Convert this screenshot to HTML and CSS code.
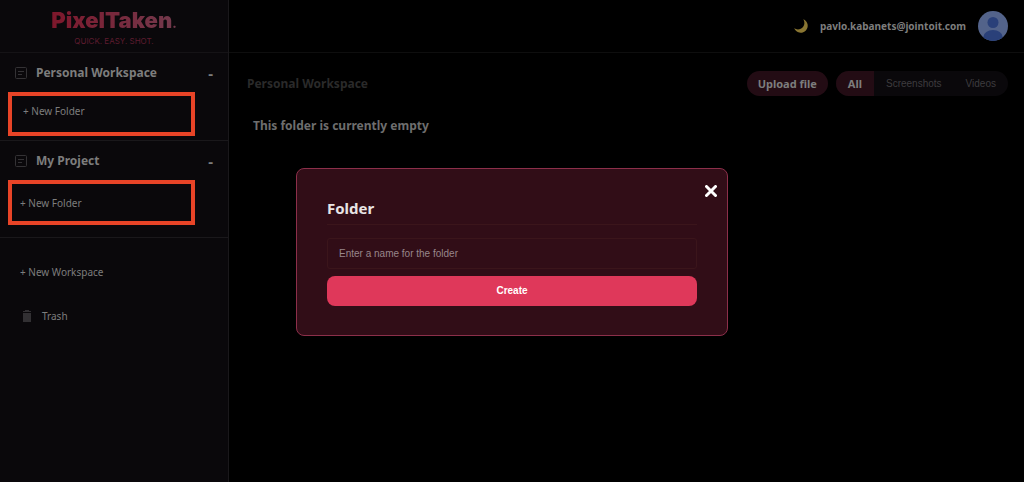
FILE: index.html
```html
<!DOCTYPE html>
<html lang="en">
<head>
    <meta charset="UTF-8">
    <meta name="viewport" content="width=device-width, initial-scale=1.0">
    <title>PixelTaken</title>
    <link rel="stylesheet" href="styles.css">
</head>
<body>
    <div class="app">
        <aside class="sidebar">
            <a href="#" class="logo">
                <span class="logo-name">PixelTaken<span class="logo-dot">.</span></span>
                <span class="logo-tagline">QUICK. EASY. SHOT.</span>
            </a>

            <section class="workspace">
                <div class="workspace-header">
                    <svg class="workspace-icon" viewBox="0 0 12 12" aria-hidden="true">
                        <rect x="0.5" y="0.5" width="11" height="11" rx="1"/>
                        <path d="M3 4.5h6M3 7.5h4"/>
                    </svg>
                    <h2>Personal Workspace</h2>
                    <button type="button" class="collapse" aria-label="Collapse">-</button>
                </div>
                <button type="button" class="new-folder">+ New Folder</button>
            </section>

            <section class="workspace workspace-project">
                <div class="workspace-header">
                    <svg class="workspace-icon" viewBox="0 0 12 12" aria-hidden="true">
                        <rect x="0.5" y="0.5" width="11" height="11" rx="1"/>
                        <path d="M3 4.5h6M3 7.5h4"/>
                    </svg>
                    <h2>My Project</h2>
                    <button type="button" class="collapse" aria-label="Collapse">-</button>
                </div>
                <button type="button" class="new-folder">+ New Folder</button>
            </section>

            <div class="sidebar-links">
                <button type="button" class="new-workspace">+ New Workspace</button>
                <a href="#" class="trash">
                    <svg class="trash-icon" viewBox="0 0 10 12" aria-hidden="true">
                        <path d="M3 0h4v1h2v1H1V1h2zM1 3h8v9H1z"/>
                    </svg>
                    Trash
                </a>
            </div>
        </aside>

        <div class="content">
            <header class="topbar">
                <button type="button" class="theme-toggle" aria-label="Toggle theme">
                    <svg viewBox="0 0 14 14" aria-hidden="true">
                        <path d="M9.300 0.200A7 7 0 1 1 0.200 9.300 C3 11.200 7 10.600 9 8 C10.800 5.600 10.800 2.600 9.300 0.200z"/>
                    </svg>
                </button>
                <span class="user-email">pavlo.kabanets@jointoit.com</span>
                <svg class="avatar" viewBox="0 0 30 30" aria-hidden="true">
                    <defs>
                        <clipPath id="avatarClip"><circle cx="15" cy="15" r="15"/></clipPath>
                    </defs>
                    <g clip-path="url(#avatarClip)">
                        <rect width="30" height="30" fill="#53638a"/>
                        <circle cx="15" cy="11.500" r="5.500" fill="#2a4079"/>
                        <ellipse cx="15" cy="25.500" rx="9.500" ry="6.500" fill="#2a4079"/>
                    </g>
                </svg>
            </header>

            <main class="main">
                <div class="toolbar">
                    <h1>Personal Workspace</h1>
                    <button type="button" class="upload">Upload file</button>
                    <div class="filters">
                        <button type="button" class="filter active">All</button>
                        <button type="button" class="filter">Screenshots</button>
                        <button type="button" class="filter">Videos</button>
                    </div>
                </div>
                <p class="empty">This folder is currently empty</p>
            </main>
        </div>
    </div>

    <div class="modal-backdrop">
        <form class="modal" role="dialog" aria-labelledby="modalTitle">
            <button type="button" class="modal-close" aria-label="Close">
                <svg viewBox="0 0 12 12" aria-hidden="true">
                    <path d="M1.500 1.500l9 9M10.500 1.500l-9 9"/>
                </svg>
            </button>
            <h2 id="modalTitle">Folder</h2>
            <input type="text" class="folder-name" aria-label="Folder name" placeholder="Enter a name for the folder">
            <button type="submit" class="create">Create</button>
        </form>
    </div>
</body>
</html>
```
FILE: styles.css
```css
* {
    box-sizing: border-box;
}

body {
    margin: 0;
    background-color: #000;
    color: #7d7d7d;
    font-family: 'Noto Sans', Tahoma, sans-serif;
    font-size: 10px;
    line-height: 16px;
}

h1,
h2,
p {
    margin: 0;
}

button {
    padding: 0;
    border: none;
    background: none;
    color: inherit;
    font: inherit;
    cursor: pointer;
}

a {
    color: inherit;
    text-decoration: none;
}

svg {
    display: block;
}

.app {
    display: flex;
    min-height: 100vh;
}

/* Sidebar */
.sidebar {
    width: 229px;
    flex-shrink: 0;
    background-color: #0a080b;
    border-right: 1px solid #1a181b;
}

.logo {
    display: flex;
    flex-direction: column;
    align-items: center;
    height: 53px;
    padding-top: 9px;
    border-bottom: 1px solid #151316;
}

.logo-name {
    font-family: Inter, 'Liberation Sans', sans-serif;
    font-size: 22px;
    font-weight: 900;
    line-height: 22px;
    background: linear-gradient(90deg, #7d172b, #733a4d);
    -webkit-background-clip: text;
    background-clip: text;
    color: transparent;
}

.logo-dot {
    font-size: 12px;
}

.logo-tagline {
    font-family: Inter, 'Liberation Sans', sans-serif;
    font-size: 8px;
    line-height: 12px;
    color: #5e1c2f;
}

.workspace {
    padding: 0 0 4px 8px;
    border-bottom: 1px solid #1a181b;
}

.workspace-header {
    display: flex;
    align-items: center;
    height: 39px;
    padding: 0 15px 0 7px;
}

.workspace-header h2 {
    flex: 1;
    margin-left: 9px;
    font-size: 12px;
}

.workspace-icon {
    width: 12px;
    height: 12px;
    fill: none;
    stroke: #343235;
}

.collapse {
    font-size: 15px;
    font-weight: bold;
}

.new-folder {
    display: block;
    width: 187px;
    height: 44px;
    padding: 0 0 6px 11px;
    border: 4px solid #e84427;
    text-align: left;
}

.workspace-project {
    padding-bottom: 12px;
}

.workspace-project .new-folder {
    height: 45px;
    padding: 0 0 0 8px;
}

.sidebar-links {
    display: flex;
    flex-direction: column;
    align-items: flex-start;
    gap: 28px;
    padding: 26px 20px;
}

.trash {
    display: flex;
    align-items: center;
    gap: 10px;
    padding-left: 2px;
}

.trash-icon {
    width: 10px;
    height: 12px;
    fill: #323033;
}

/* Top bar */
.content {
    flex: 1;
}

.topbar {
    display: flex;
    align-items: center;
    justify-content: flex-end;
    gap: 12px;
    height: 53px;
    padding-right: 16px;
    border-bottom: 1px solid #0e0e0e;
}

.theme-toggle svg {
    width: 14px;
    height: 14px;
    fill: #8a7632;
}

.user-email {
    font-weight: bold;
}

.avatar {
    width: 30px;
    height: 30px;
}

/* Folder content */
.main {
    padding: 18px 16px 18px 18px;
}

.toolbar {
    display: flex;
    align-items: center;
    gap: 8px;
}

.toolbar h1 {
    flex: 1;
    font-size: 12px;
    color: #2a2a2a;
}

.upload {
    height: 25px;
    padding: 0 11px;
    border-radius: 13px;
    background-color: #230c14;
    font-size: 11px;
    font-weight: bold;
}

.filters {
    display: flex;
    height: 25px;
    border-radius: 13px;
    overflow: hidden;
    background-color: #0a080b;
}

.filter {
    padding: 0 12px;
    font-family: 'Liberation Sans', Arial, sans-serif;
    color: #3e3c3f;
}

.filter.active {
    background-color: #230c14;
    color: #7d7d7d;
    font-family: inherit;
    font-size: 11px;
    font-weight: bold;
}

.empty {
    margin: 22px 0 0 6px;
    font-size: 12px;
    font-weight: bold;
    color: #6e6e6e;
}

/* New folder modal */
.modal-backdrop {
    position: fixed;
    inset: 0;
    display: flex;
    align-items: flex-start;
    justify-content: center;
    padding: 168px 16px 16px;
}

.modal {
    position: relative;
    display: flex;
    flex-direction: column;
    width: 100%;
    max-width: 432px;
    padding: 28px 30px 29px;
    border: 1px solid #8c2f4a;
    border-radius: 8px;
    background-color: #310d17;
}

.modal h2 {
    margin-bottom: 13px;
    padding-bottom: 4px;
    border-bottom: 1px solid #3b151b;
    font-size: 15px;
    line-height: 23px;
    color: #e8e4e5;
}

.modal-close {
    position: absolute;
    top: 16px;
    right: 10px;
}

.modal-close svg {
    width: 12px;
    height: 12px;
    fill: none;
    stroke: #fff;
    stroke-width: 3;
    stroke-linecap: round;
}

.folder-name {
    height: 31px;
    margin-bottom: 7px;
    padding: 0 11px;
    border: 1px solid #3b151b;
    border-radius: 3px;
    background-color: transparent;
    color: #fff;
    font-family: 'Liberation Sans', Arial, sans-serif;
    font-size: 10px;
}

.folder-name::placeholder {
    color: #98868b;
}

.create {
    height: 30px;
    border-radius: 8px;
    background-color: #df385a;
    color: #fff;
    font-family: 'Liberation Sans', Arial, sans-serif;
    font-weight: bold;
}
```
